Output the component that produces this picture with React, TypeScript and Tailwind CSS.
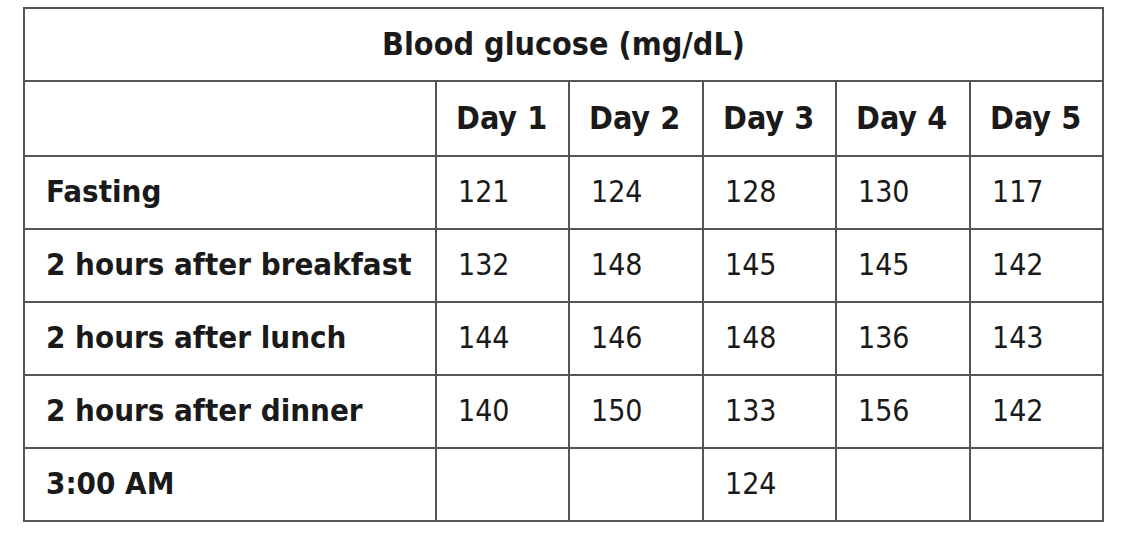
const days = ['Day 1', 'Day 2', 'Day 3', 'Day 4', 'Day 5']

const rows: { label: string; values: string[] }[] = [
  { label: 'Fasting', values: ['121', '124', '128', '130', '117'] },
  { label: '2 hours after breakfast', values: ['132', '148', '145', '145', '142'] },
  { label: '2 hours after lunch', values: ['144', '146', '148', '136', '143'] },
  { label: '2 hours after dinner', values: ['140', '150', '133', '156', '142'] },
  { label: '3:00 AM', values: ['', '', '124', '', ''] },
]

export default function App() {
  return (
    <div
      className="w-[1146px] h-[546px] bg-white pl-[23px] pt-[7px] text-[#1a1a1a]"
      style={{ fontFamily: '"DejaVu Sans Condensed", "DejaVu Sans", sans-serif' }}
    >
      <table className="border-collapse table-fixed w-[1081px] text-[30px] leading-none">
        <colgroup>
          <col className="w-[412px]" />
          <col className="w-[133px]" />
          <col className="w-[134px]" />
          <col className="w-[133px]" />
          <col className="w-[134px]" />
          <col className="w-[133px]" />
        </colgroup>
        <tbody>
          <tr className="h-[73px]">
            <th colSpan={6} className="border-2 border-[#555] font-bold text-[32px] text-center pb-[2px]">
              Blood glucose (mg/dL)
            </th>
          </tr>
          <tr className="h-[75px]">
            <td className="border-2 border-[#555]" />
            {days.map((d) => (
              <th key={d} className="border-2 border-[#555] font-bold text-[32px] text-left pl-[19px] pb-[2px] whitespace-nowrap">
                {d}
              </th>
            ))}
          </tr>
          {rows.map((r) => (
            <tr key={r.label} className="h-[73px]">
              <td className="border-2 border-[#555] font-bold text-[31px] pl-[21px] pb-[2px] whitespace-nowrap">
                {r.label}
              </td>
              {r.values.map((v, i) => (
                <td key={i} className="border-2 border-[#555] pl-[21px] pb-[2px]">
                  {v}
                </td>
              ))}
            </tr>
          ))}
        </tbody>
      </table>
    </div>
  )
}
